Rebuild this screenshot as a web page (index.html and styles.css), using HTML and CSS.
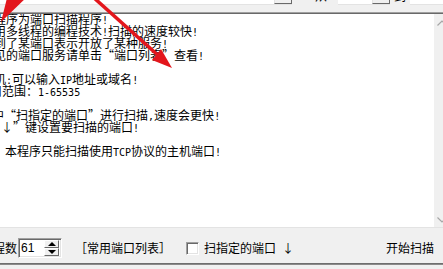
FILE: index.html
```html
<!DOCTYPE html>
<html lang="zh-CN">
<head>
<meta charset="utf-8">
<title>端口扫描</title>
<link rel="stylesheet" href="styles.css">
</head>
<body>
<div class="win">
  <div class="topbar">
    <div class="combo host"><div class="field"></div><div class="drop"></div></div>
    <div class="lbl lbl-a"><span>从</span></div>
    <div class="combo pstart"><div class="field"></div><div class="drop"></div></div>
    <div class="lbl lbl-b"><span>到</span></div>
    <div class="combo pend"><div class="field"></div></div>
  </div>
  <div class="main">
    <div class="text">
      <div class="ln i-6">程序为端口扫描程序<span class="a">!</span></div>
      <div class="ln i-6">用多线程的编程技术<span class="a">!</span>扫描的速度较快<span class="a">!</span></div>
      <div class="ln i-6">到了某端口表示开放了某种服务<span class="a">!</span></div>
      <div class="ln i-6">见的端口服务请单击“端口列表”查看<span class="a">!</span></div>
      <div class="ln"></div>
      <div class="ln i-6">机<span class="a">:</span>可以输入<span class="a">IP</span>地址或域名<span class="a">!</span></div>
      <div class="ln i-10">口范围：<span class="a">1-65535</span></div>
      <div class="ln"></div>
      <div class="ln i-8">中<span class="q">“</span>扫指定的端口<span class="q">”</span>进行扫描<span class="a">,</span>速度会更快<span class="a">!</span></div>
      <div class="ln i-4">↓<span class="q">”</span>键设置要扫描的端口<span class="a">!</span></div>
      <div class="ln"></div>
      <div class="ln i5">本程序只能扫描使用<span class="a">TCP</span>协议的主机端口<span class="a">!</span></div>
    </div>
    <div class="vscroll">
      <svg class="chev" width="10" height="6" viewBox="0 0 10 6"><polyline points="0.5,5.5 5,1 9.5,5.5" fill="none" stroke="#a6a6a6" stroke-width="1.2"/></svg>
      <svg class="chev" width="10" height="6" viewBox="0 0 10 6"><polyline points="0.5,0.5 5,5 9.5,0.5" fill="none" stroke="#a6a6a6" stroke-width="1.2"/></svg>
    </div>
  </div>
  <div class="toolbar">
    <span class="t threads">线程数</span>
    <div class="spin">
      <span class="spin-val">61</span>
      <div class="spin-btns">
        <div class="sb"><i class="tri up"></i></div>
        <div class="sb"><i class="tri down"></i></div>
      </div>
    </div>
    <span class="t list">［常用端口列表］</span>
    <span class="check"></span>
    <span class="t chk-label">扫指定的端口</span>
    <span class="t arrow-down">↓</span>
    <span class="t start">开始扫描</span>
  </div>
  <div class="edge"></div>
</div>
<svg class="arrows" width="443" height="269" viewBox="0 0 443 269">
  <polygon points="1,22 8,-6 30,-6" fill="#e3161c"/>
  <line x1="93" y1="-3" x2="160" y2="57" stroke="#e3161c" stroke-width="3.5"/>
  <polygon points="172,68 152,60 161,49" fill="#e3161c"/>
</svg>
</body>
</html>
```

FILE: styles.css
```css
html, body {
  margin: 0;
  padding: 0;
}
body {
  width: 443px;
  height: 269px;
  overflow: hidden;
  position: relative;
  background: #f0f0f0;
  font-family: "Noto Sans CJK SC", "Noto Sans", sans-serif;
  font-size: 12px;
  color: #000;
}
.win {
  width: 443px;
  height: 269px;
  display: flex;
  flex-direction: column;
}

/* top row of combo boxes (cut off) */
.topbar {
  height: 12px;
  display: flex;
  align-items: flex-start;
  flex: none;
}
.combo {
  display: flex;
  height: 4px;
  background: #fff;
  border-bottom: 1px solid #e3e3e3;
}
.combo .field { flex: 1; }
.combo .drop {
  width: 16px;
  height: 3px;
  background: #f0f0f0;
  border-right: 1px solid #696969;
  border-bottom: 1px solid #696969;
  border-left: 1px solid #e3e3e3;
}
.host { width: 292px; }
.pstart { width: 52px; }
.pend { flex: 1; }
.lbl {
  height: 3px;
  overflow: hidden;
}
.lbl span {
  display: block;
  line-height: 12px;
  margin-top: -10px;
}
.lbl-a { width: 46px; padding-left: 0; }
.lbl-a span { margin-left: 23px; }
.lbl-b { width: 20px; }
.lbl-b span { margin-left: 4px; }

/* text area */
.main {
  height: 216px;
  flex: none;
  display: flex;
  border-top: 1px solid #a0a0a0;
  box-shadow: inset 0 1px 0 #696969;
  border-bottom: 1px solid #e3e3e3;
  box-sizing: border-box;
  padding-top: 1px;
}
.text {
  flex: 1;
  background: #fff;
  overflow: hidden;
  padding-top: 0;
}
.ln {
  height: 12px;
  line-height: 12px;
  white-space: nowrap;
  margin-top: 0;
}
.ln:first-child { margin-top: -1px; }
.i-6 { margin-left: -6px; }
.i-10 { margin-left: -10px; }
.i-8 { margin-left: -8px; }
.i-4 { margin-left: 1px; }
.i5 { margin-left: 5px; }
.a {
  font-family: "DejaVu Sans Mono", monospace;
  font-size: 10px;
}
.q { }

.vscroll {
  width: 9px;
  flex: none;
  background: #f0f0f0;
  display: flex;
  flex-direction: column;
  justify-content: space-between;
  padding: 6px 0 4px 3px;
  box-sizing: border-box;
  overflow: visible;
}
.chev { display: block; flex: none; }

/* bottom toolbar */
.toolbar {
  height: 35px;
  flex: none;
  box-sizing: border-box;
  padding-top: 4px;
  display: flex;
  align-items: center;
}
.t {
  line-height: 14px;
  white-space: nowrap;
}
.threads { margin-left: -19px; }
.spin {
  width: 44px;
  height: 20px;
  box-sizing: border-box;
  margin-left: 1px;
  background: #fff;
  border-top: 1px solid #a0a0a0;
  border-left: 1px solid #a0a0a0;
  border-right: 1px solid #fff;
  border-bottom: 1px solid #fff;
  box-shadow: inset 1px 1px 0 #696969, inset -1px -1px 0 #e3e3e3;
  display: flex;
  align-items: center;
}
.spin-val {
  font-family: "Liberation Sans", sans-serif;
  font-size: 12px;
  padding-left: 2px;
  line-height: 14px;
}
.spin-btns {
  margin-left: auto;
  margin-right: 2px;
  width: 15px;
  height: 16px;
  display: flex;
  flex-direction: column;
}
.sb {
  flex: 1;
  background: #f0f0f0;
  box-sizing: border-box;
  border-top: 1px solid #fff;
  border-left: 1px solid #fff;
  border-right: 1px solid #696969;
  border-bottom: 1px solid #696969;
  display: flex;
  align-items: center;
  justify-content: center;
}
.tri {
  width: 0;
  height: 0;
  border-left: 4px solid transparent;
  border-right: 4px solid transparent;
}
.tri.up { border-bottom: 4px solid #000; }
.tri.down { border-top: 4px solid #000; }

.list { margin-left: 13px; }
.check {
  width: 13px;
  height: 13px;
  box-sizing: border-box;
  margin-left: 15px;
  background: #fff;
  border-top: 1px solid #a0a0a0;
  border-left: 1px solid #a0a0a0;
  border-right: 1px solid #fff;
  border-bottom: 1px solid #fff;
  box-shadow: inset 1px 1px 0 #696969, inset -1px -1px 0 #e3e3e3;
  margin-top: 2px;
}
.chk-label { margin-left: 5px; }
.arrow-down { margin-left: 6px; }
.start {
  margin-left: auto;
  margin-right: 9px;
}
.edge {
  height: 2px;
  flex: none;
  background: #8a8a8a;
  border-top: 1px solid #6e6e6e;
  box-sizing: border-box;
}

/* red annotation arrows drawn over the screenshot */
.arrows {
  position: absolute;
  top: 0;
  left: 0;
  pointer-events: none;
}
```
